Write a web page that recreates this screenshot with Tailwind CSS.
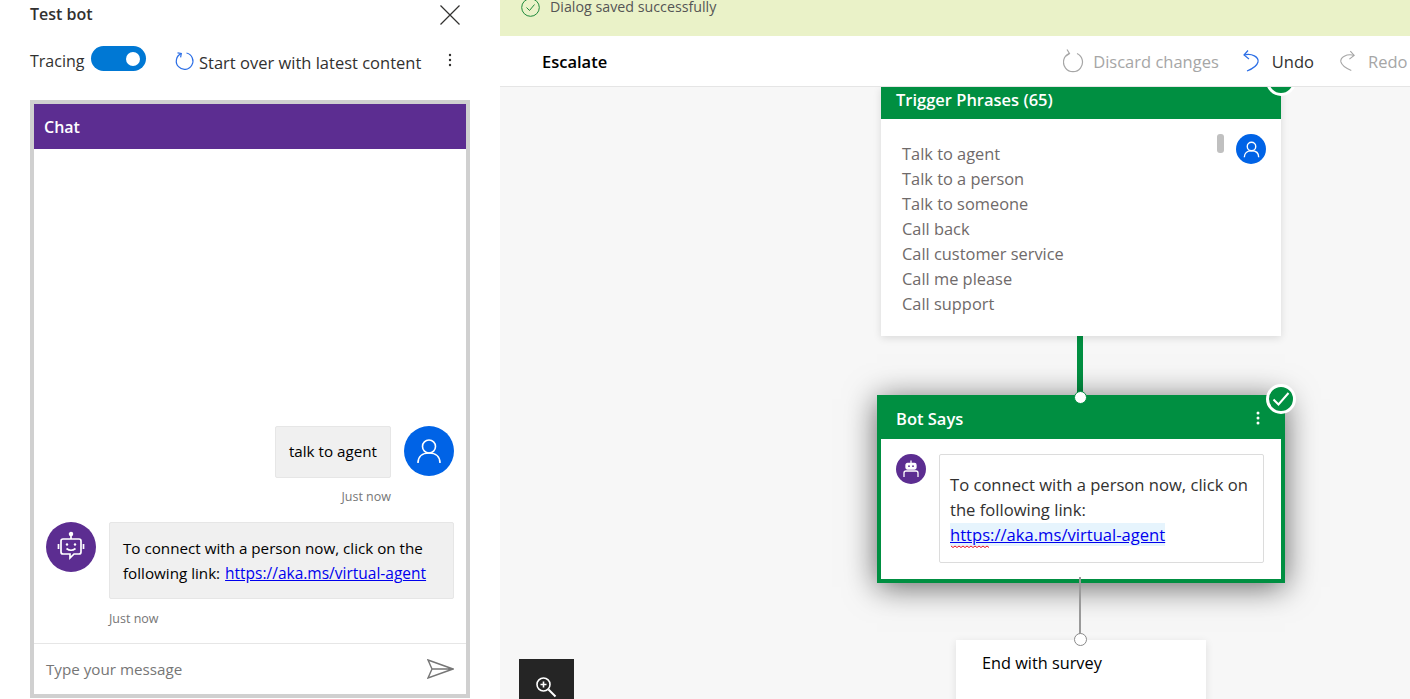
<!DOCTYPE html>
<html lang="en">
  <head>
    <meta charset="UTF-8" />
    <title>Test bot</title>
    <script src="https://cdn.jsdelivr.net/npm/@tailwindcss/browser@4"></script>
  </head>
  <body class="h-[699px] w-[1410px] overflow-hidden bg-white font-['Open_Sans',sans-serif] text-[#323130]">
    <div class="flex h-[699px]">
      <!-- test bot panel -->
      <aside class="flex h-[699px] w-[500px] shrink-0 flex-col pl-[30px] pr-[30px]">
        <div class="flex h-[29px] items-center justify-between pr-[10px]">
          <h1 class="-mt-[1px] text-[16px] font-semibold leading-[28px]">Test bot</h1>
          <svg class="h-[20px] w-[20px]" viewBox="0 0 20 20" fill="none" stroke="#323130" stroke-width="1.2"><path d="M0.5 0.5 19.5 19.5M19.5 0.5 0.5 19.5" /></svg>
        </div>
        <div class="mt-[17px] flex h-[25px] items-center">
          <span class="mt-[5px] w-[61px] text-[16px] leading-[25px]">Tracing</span>
          <span class="flex h-[25px] w-[55px] items-center justify-end rounded-full bg-[#0078d4] pr-[6px]">
            <span class="h-[14px] w-[14px] rounded-full bg-white"></span>
          </span>
          <svg class="ml-[29px] mt-[4px] h-[20px] w-[20px]" viewBox="0 0 20 20" fill="none" stroke="#2b6ee6" stroke-width="1.2"><path d="M6 2.6A8.3 8.3 0 1 0 11.5 2" /><path d="M2.5 1.8 6.3 2.5 5.6 6.4" /></svg>
          <span class="ml-[4px] mt-[8px] text-[16.5px] leading-[25px]">Start over with latest content</span>
          <svg class="ml-[27px] mt-[3px] h-[14px] w-[4px]" viewBox="0 0 4 14" fill="#323130"><circle cx="2" cy="2" r="1.2" /><circle cx="2" cy="7" r="1.2" /><circle cx="2" cy="12" r="1.2" /></svg>
        </div>
        <section class="mt-[29px] flex h-[598px] flex-col border-4 border-[#d0d0d0]">
          <div class="flex h-[45px] items-center bg-[#5c2d91] pl-[10px] text-[16px] font-semibold text-white">Chat</div>
          <div class="flex flex-1 flex-col justify-end pl-[12px] pr-[12px] text-[15.2px] text-black">
            <div class="flex justify-end gap-[13px]">
              <div class="flex h-[52px] items-center rounded-[2px] border border-[#e6e6e6] bg-[#f0f0f0] px-[13px] pb-[2px]">talk to agent</div>
              <span class="flex h-[50px] w-[50px] items-center justify-center rounded-full bg-[#0063e6]">
                <svg class="h-[26px] w-[26px]" viewBox="0 0 26 26" fill="none" stroke="white" stroke-width="1.6"><circle cx="13" cy="8.5" r="6.5" /><path d="M2 25C2 18.5 6.5 15 13 15S24 18.5 24 25" /></svg>
              </span>
            </div>
            <div class="mt-[10px] pr-[63px] text-right text-[12.5px] leading-[17px] text-[#767676]">Just now</div>
            <div class="mt-[17px] flex gap-[13px]">
              <span class="flex h-[50px] w-[50px] shrink-0 items-center justify-center rounded-full bg-[#5c2d91]">
                <svg class="h-[32px] w-[28px]" viewBox="0 0 28 32" fill="none" stroke="white" stroke-width="1.7"><circle cx="14" cy="3" r="1.4" fill="white" /><path d="M14 4.5V8" /><path d="M6 8H22Q24 8 24 10V21Q24 23 22 23H17L13 27V23H6Q4 23 4 21V10Q4 8 6 8Z" /><path d="M1.5 13V18M26.5 13V18" /><circle cx="10" cy="13.5" r="1.2" fill="white" stroke="none" /><circle cx="18" cy="13.5" r="1.2" fill="white" stroke="none" /><path d="M9.5 17.5Q14 21 18.5 17.5" /></svg>
              </span>
              <div class="h-[77px] flex-1 rounded-[2px] border border-[#e6e6e6] bg-[#f0f0f0] px-[13px] pt-[13px] leading-[25px]">
                To connect with a person now, click on the<br />following link: <a href="#" class="ml-[1px] text-[15.5px] text-[#0000ee] underline">https://aka.ms/virtual-agent</a>
              </div>
            </div>
            <div class="mt-[11px] pl-[63px] text-[12.5px] leading-[17px] text-[#767676]">Just now</div>
            <div class="h-[16px]"></div>
          </div>
          <div class="flex h-[51px] items-center justify-between border-t border-[#e6e6e6] pl-[12px] pr-[12px]">
            <span class="text-[15.2px] text-[#767676]">Type your message</span>
            <svg class="h-[20px] w-[27px]" viewBox="0 0 27 20" fill="none" stroke="#767676" stroke-width="1.4"><path d="M1 1 26 10 1 19 5 10ZM5 10H26" /></svg>
          </div>
        </section>
      </aside>

      <!-- dialog editor -->
      <main class="flex min-w-0 flex-1 flex-col bg-[#f7f7f7]">
        <div class="flex h-[36px] items-start gap-[10px] bg-[#eaf2c8] pl-[21px] text-[14.25px] leading-[14px] text-[#555]">
          <svg class="-mt-[2px] h-[19px] w-[19px] shrink-0" viewBox="0 0 19 19" fill="none" stroke="#1f8a3b" stroke-width="1"><circle cx="9.5" cy="9.5" r="8.8" /><path d="M5.5 9.5 8.5 12.5 13.5 6.5" /></svg>
          <span>Dialog saved successfully</span>
        </div>
        <div class="flex h-[51px] items-center border-b border-[#e5e5e5] bg-white pl-[42px] text-[16.5px]">
          <span class="mt-[3px] font-semibold text-black">Escalate</span>
          <div class="ml-auto flex items-center text-[#a6a6a6]">
            <svg class="h-[24px] w-[21px]" viewBox="0 0 21 24" fill="none" stroke="#a6a6a6" stroke-width="1.2"><path d="M6 4.5A9.5 9.5 0 1 0 14 4.5" /><path d="M4 0.5 6.5 4.5 3 7" /></svg>
            <span class="ml-[9px] mt-[3px]">Discard changes</span>
            <svg class="ml-[23px] h-[22px] w-[18px]" viewBox="0 0 18 22" fill="none" stroke="#2b6ee6" stroke-width="1.2"><path d="M2 5C10 3 17 7 16 12C15 16 10 19 5 21" /><path d="M6 0.5 2 5 7 9" /></svg>
            <span class="ml-[12px] mt-[3px] text-[#323130]">Undo</span>
            <svg class="ml-[25px] h-[22px] w-[17px]" viewBox="0 0 18 22" fill="none" stroke="#a6a6a6" stroke-width="1.2"><path d="M16 5C8 3 1 7 2 12C3 16 8 19 13 21" /><path d="M12 0.5 16 5 11 9" /></svg>
            <span class="ml-[12px] mt-[3px] w-[42px]">Redo</span>
          </div>
        </div>

        <!-- canvas: nodes sit at their own coordinates -->
        <div class="relative flex-1 overflow-hidden">
          <div class="absolute left-[577px] top-[249px] h-[62px] w-[6px] bg-[#008f41]"></div>

          <div class="absolute left-[381px] top-0 h-[249px] w-[400px] bg-white shadow-[0_2px_8px_rgba(0,0,0,0.12)]">
            <div class="flex h-[32px] items-center bg-[#008f41] pb-[6px] pl-[15px] text-[16.5px] font-semibold text-white">Trigger Phrases (65)</div>
            <div class="flex justify-between pl-[21px] pr-[15px] pt-[22px]">
              <ul class="text-[16.4px] leading-[25px] text-[#6f6a6a]">
                <li>Talk to agent</li>
                <li>Talk to a person</li>
                <li>Talk to someone</li>
                <li>Call back</li>
                <li>Call customer service</li>
                <li>Call me please</li>
                <li>Call support</li>
              </ul>
              <div class="-mt-[7px] flex items-start gap-[12px]">
                <span class="h-[19px] w-[7px] rounded-[3px] bg-[#c0c0c0]"></span>
                <span class="flex h-[30px] w-[30px] items-center justify-center rounded-full bg-[#0063e6]">
                  <svg class="h-[17px] w-[17px]" viewBox="0 0 26 26" fill="none" stroke="white" stroke-width="2.1"><circle cx="13" cy="8.5" r="6.5" /><path d="M2 25C2 18.5 6.5 15 13 15S24 18.5 24 25" /></svg>
                </span>
              </div>
            </div>
          </div>
          <div class="absolute left-[766px] -top-[21px] h-[30px] w-[30px] rounded-full border-[3px] border-white bg-[#008f41]"></div>

          <div class="absolute left-[377px] top-[308px] h-[188px] w-[408px] border-4 border-[#008f41] bg-white shadow-[0_4px_30px_rgba(0,0,0,0.6)]">
            <div class="-mt-[1px] flex h-[41px] items-center justify-between bg-[#008f41] pl-[15px] pr-[21px] pt-[2px] text-[16.5px] font-semibold text-white">
              <span>Bot Says</span>
              <svg class="-mt-[4px] h-[14px] w-[4px]" viewBox="0 0 4 14" fill="white"><circle cx="2" cy="2" r="1.5" /><circle cx="2" cy="7" r="1.5" /><circle cx="2" cy="12" r="1.5" /></svg>
            </div>
            <div class="flex gap-[13px] pl-[15px] pt-[15px]">
              <span class="flex h-[30px] w-[30px] shrink-0 items-center justify-center rounded-full bg-[#5c2d91]">
                <svg class="h-[18px] w-[16px]" viewBox="0 0 16 18" fill="none" stroke="white" stroke-width="1.3"><path d="M8 0.5V3" /><rect x="3" y="3.5" width="10" height="5.5" rx="1.5" fill="white" /><path d="M1 17V13Q1 11 3 11H13Q15 11 15 13V17" /><circle cx="6" cy="6.2" r="0.9" fill="#5c2d91" stroke="none" /><circle cx="10" cy="6.2" r="0.9" fill="#5c2d91" stroke="none" /></svg>
              </span>
              <div class="h-[109px] w-[325px] rounded-[2px] border border-[#dcdcdc] px-[10px] pt-[17px] text-[16.6px] leading-[25px] text-[#323130]">
                To connect with a person now, click on the following link:<br />
                <a href="#" class="bg-[#e6f4fd] text-[#0000ee] underline decoration-[#0000ee]">https://aka.ms/virtual-agent</a>
              </div>
            </div>
          </div>
          <!-- spell check squiggle under the link -->
          <svg class="absolute left-[451px] top-[458px] h-[3px] w-[39px]" viewBox="0 0 39 3" fill="none" stroke="#e81123" stroke-width="1"><path d="M0 1 2 2.5 4 1 6 2.5 8 1 10 2.5 12 1 14 2.5 16 1 18 2.5 20 1 22 2.5 24 1 26 2.5 28 1 30 2.5 32 1 34 2.5 36 1 38 2.5" /></svg>
          <div class="absolute left-[579px] top-[490px] h-[63px] w-[2px] bg-[#9a9a9a]"></div>
          <div class="absolute left-[574px] top-[304px] h-[13px] w-[13px] rounded-full border border-[#008f41] bg-white"></div>
          <span class="absolute left-[766px] top-[297px] flex h-[30px] w-[30px] items-center justify-center rounded-full border-[3px] border-white bg-[#008f41]">
            <svg class="h-[16px] w-[18px]" viewBox="0 0 18 16" fill="none" stroke="white" stroke-width="2"><path d="M1.5 8.5 6.5 13.5 16.5 2" /></svg>
          </span>

          <div class="absolute left-[456px] top-[553px] h-[80px] w-[250px] bg-white pl-[26px] pt-[11px] text-[16.3px] leading-[25px] text-black shadow-[0_2px_8px_rgba(0,0,0,0.1)]">End with survey</div>
          <div class="absolute left-[574px] top-[546px] h-[13px] w-[13px] rounded-full border border-[#8a8a8a] bg-white"></div>

          <button class="absolute bottom-0 left-[19px] flex h-[40px] w-[55px] items-end justify-center bg-[#252525] pb-[1px] pr-[2px]">
            <svg class="h-[22px] w-[22px]" viewBox="0 0 22 22" fill="none" stroke="white" stroke-width="1.6"><circle cx="8.5" cy="8.5" r="6.5" /><path d="M13.5 13.5 20.5 20.5" stroke-width="2" /><path d="M5.5 8.5H11.5M8.5 5.5V11.5" /></svg>
          </button>
        </div>
      </main>
    </div>
  </body>
</html>
